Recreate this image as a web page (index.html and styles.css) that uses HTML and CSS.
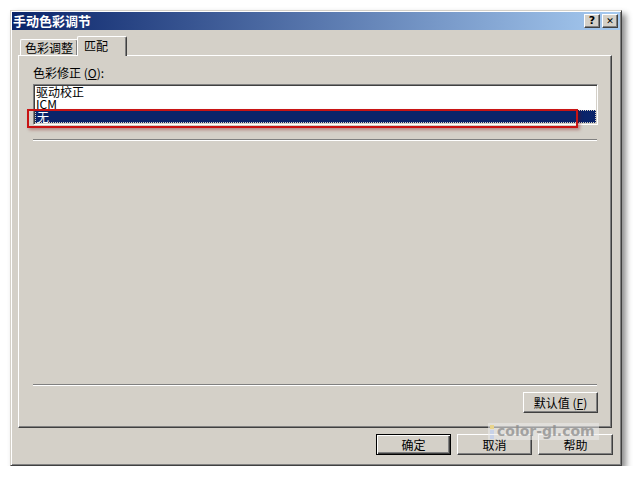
FILE: index.html
```html
<!DOCTYPE html>
<html lang="zh-CN">
<head>
    <meta charset="UTF-8">
    <title>手动色彩调节</title>
    <link rel="stylesheet" href="styles.css">
</head>
<body>
    <div class="window">
        <div class="titlebar">
            <span class="title">手动色彩调节</span>
            <span class="tbtn">?</span>
            <span class="tbtn close">&#x2715;</span>
        </div>

        <div class="tabs">
            <div class="tab">色彩调整</div>
            <div class="tab active">匹配</div>
        </div>

        <div class="panel">
            <div class="label">色彩修正 (<u>O</u>):</div>
            <div class="listbox">
                <div class="item">驱动校正</div>
                <div class="item">ICM</div>
                <div class="item sel">无</div>
            </div>
            <div class="sep first"></div>
            <div class="spacer"></div>
            <div class="sep"></div>
            <div class="panel-foot">
                <button class="btn">默认值 (<u>F</u>)</button>
            </div>
        </div>

        <div class="foot">
            <button class="btn default">确定</button>
            <button class="btn">取消</button>
            <button class="btn">帮助</button>
        </div>
    </div>

    <!-- 标注框和水印 -->
    <div class="mark"></div>
    <div class="watermark"><span class="dots"><i></i><i></i><i></i></span>color-gl.com</div>
</body>
</html>
```

FILE: styles.css
```css
body{
    margin: 0;
    background: #fff;
    font-family: "Noto Sans CJK SC", "DejaVu Sans", sans-serif;
    font-size: 12px;
    color: #000;
}
.window{
    position: relative;
    margin: 10px 0 0 10px;
    width: 612px;
    height: 456px;
    box-sizing: border-box;
    padding: 1px;
    background: #d4d0c8;
    border: 1px solid;
    border-color: #d4d0c8 #404040 #404040 #d4d0c8;
    box-shadow: inset 1px 1px #fff, inset -1px -1px #808080, 4px 4px 6px rgba(0,0,0,.45);
    display: flex;
    flex-direction: column;
}
.titlebar{
    height: 18px;
    display: flex;
    align-items: center;
    padding: 0 2px 0 1px;
    background: linear-gradient(to right, #0a246a, #a6caf0);
}
.title{
    flex: 1;
    color: #fff;
    font-weight: bold;
    font-size: 13px;
    line-height: 18px;
}
.tbtn{
    width: 16px;
    height: 14px;
    box-sizing: border-box;
    margin-left: 2px;
    background: #d4d0c8;
    border: 1px solid;
    border-color: #fff #404040 #404040 #fff;
    box-shadow: inset -1px -1px #808080;
    font-family: "DejaVu Sans", sans-serif;
    font-weight: bold;
    font-size: 11px;
    line-height: 12px;
    text-align: center;
}
.tbtn.close{
    font-size: 9px;
}
.tabs{
    display: flex;
    align-items: flex-end;
    height: 19px;
    margin-top: 6px;
    padding-left: 8px;
}
.tab{
    height: 16px;
    box-sizing: border-box;
    padding: 0 4px;
    line-height: 15px;
    border: 1px solid;
    border-bottom: 0;
    border-color: #fff #404040 #404040 #fff;
    box-shadow: inset -1px 0 #808080;
    border-radius: 2px 2px 0 0;
}
.tab.active{
    position: relative;
    z-index: 1;
    height: 20px;
    margin-bottom: -1px;
    margin-left: -1px;
    padding: 0 18px 0 6px;
    line-height: 17px;
    background: #d4d0c8;
}
.panel{
    height: 373px;
    box-sizing: border-box;
    margin: 0 8px 0 6px;
    padding: 10px 13px 14px 14px;
    border: 1px solid;
    border-color: #fff #404040 #404040 #fff;
    box-shadow: inset -1px -1px #808080;
    display: flex;
    flex-direction: column;
}
.label{
    line-height: 14px;
}
.listbox{
    margin-top: 4px;
    height: 41px;
    box-sizing: border-box;
    background: #fff;
    border: 1px solid;
    border-color: #808080 #fff #fff #808080;
    box-shadow: inset 1px 1px #404040, inset -1px -1px #d4d0c8;
    padding: 1px;
    overflow: hidden;
}
.item{
    height: 12px;
    line-height: 12px;
    padding-left: 1px;
}
.item.sel{
    height: 13px;
    box-sizing: border-box;
    line-height: 11px;
    background: #0a246a;
    color: #fff;
    border: 1px dotted #d4d0c8;
}
.sep{
    height: 0;
    border-top: 1px solid #808080;
    border-bottom: 1px solid #fff;
    margin-right: 1px;
}
.sep.first{
    margin-top: 14px;
}
.spacer{
    flex: 1;
}
.panel-foot{
    display: flex;
    justify-content: flex-end;
    margin-top: 6px;
}
.btn{
    width: 75px;
    height: 21px;
    box-sizing: border-box;
    padding: 0;
    background: #d4d0c8;
    font: inherit;
    line-height: 17px;
    color: #000;
    border: 1px solid;
    border-color: #fff #404040 #404040 #fff;
    box-shadow: inset -1px -1px #808080;
}
.btn.default{
    border-color: #000;
    box-shadow: inset 1px 1px #fff, inset -1px -1px #404040, inset -2px -2px #808080;
}
.foot{
    display: flex;
    justify-content: flex-end;
    gap: 6px;
    margin: 6px 7px 0 0;
}
.mark{
    position: absolute;
    left: 27px;
    top: 109px;
    width: 551px;
    height: 19px;
    box-sizing: border-box;
    border: 2px solid #c81414;
    box-shadow: 2px 2px 3px rgba(120,0,0,.35);
}
.watermark{
    position: absolute;
    left: 488px;
    top: 423px;
    height: 17px;
    padding: 0 4px 0 2px;
    background: rgba(235,235,235,.55);
    color: rgba(140,140,140,.75);
    font-family: "DejaVu Sans", sans-serif;
    font-weight: bold;
    font-size: 14px;
    line-height: 17px;
    display: flex;
    align-items: center;
    gap: 3px;
}
.dots{
    display: flex;
    flex-direction: column;
    gap: 1px;
}
.dots i{
    width: 4px;
    height: 4px;
    background: #c8d2e8;
}
.dots i:first-child{
    background: #e8d48c;
}
```
